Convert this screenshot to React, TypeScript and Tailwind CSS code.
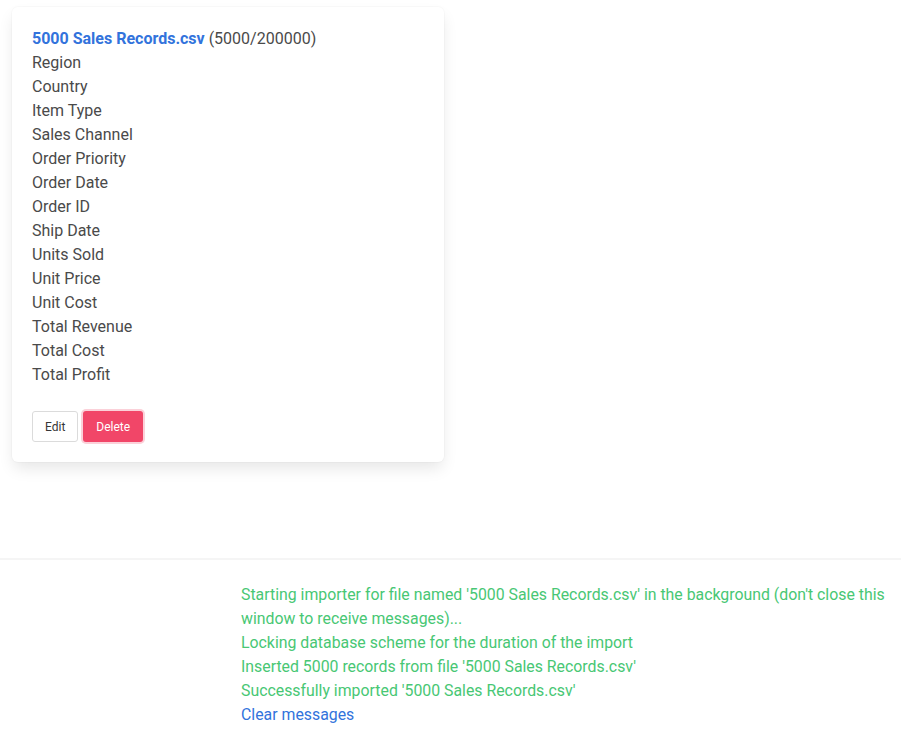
const fields = [
  'Region',
  'Country',
  'Item Type',
  'Sales Channel',
  'Order Priority',
  'Order Date',
  'Order ID',
  'Ship Date',
  'Units Sold',
  'Unit Price',
  'Unit Cost',
  'Total Revenue',
  'Total Cost',
  'Total Profit',
];

const messages = [
  "Starting importer for file named '5000 Sales Records.csv' in the background (don't close this window to receive messages)...",
  'Locking database scheme for the duration of the import',
  "Inserted 5000 records from file '5000 Sales Records.csv'",
  "Successfully imported '5000 Sales Records.csv'",
];

export default function App() {
  return (
    <div
      className="w-[901px] min-h-[753px] bg-white text-[#4a4a4a] text-base leading-6"
      style={{ fontFamily: 'Roboto, "Liberation Sans", sans-serif' }}
    >
      <div className="pt-[7px] pl-3">
        <div className="w-[432px] rounded-md bg-white p-5 shadow-[0_8px_16px_-2px_rgba(10,10,10,0.1),0_0_0_1px_rgba(10,10,10,0.02)]">
          <div>
            <a className="font-bold text-[#3273dc]">5000 Sales Records.csv</a> (5000/200000)
          </div>
          {fields.map((f) => (
            <div key={f}>{f}</div>
          ))}
          <div className="mt-6 flex gap-[5px]">
            <button className="h-[31px] rounded-[3px] border border-[#dbdbdb] bg-white px-3 text-xs text-[#363636]">
              Edit
            </button>
            <button className="h-[31px] rounded-[3px] border border-transparent bg-[#f14668] px-3 text-xs text-white shadow-[0_0_0_2px_rgba(241,70,104,0.25)]">
              Delete
            </button>
          </div>
        </div>
      </div>

      <hr className="mt-[96px] h-[2px] border-0 bg-[#f5f5f5]" />

      <div className="pt-[23px] pl-[241px] pr-2 text-[15.85px]">
        {messages.map((m) => (
          <div key={m} className="text-[#48c774]">
            {m}
          </div>
        ))}
        <a className="text-[#3273dc]">Clear messages</a>
      </div>
    </div>
  );
}
